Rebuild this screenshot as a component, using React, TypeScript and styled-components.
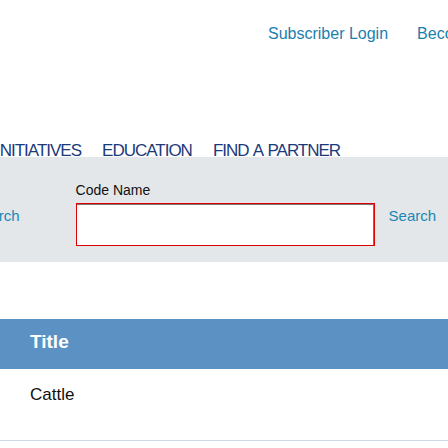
import React from "react";
import styled, { createGlobalStyle } from "styled-components";

const Global = createGlobalStyle`
  html, body { margin: 0; padding: 0; background: #fff; overflow: hidden; }
  body { font-family: "Liberation Sans", Arial, sans-serif; width: 448px; }
`;

const Page = styled.div`
  width: 448px;
  overflow: hidden;
  font-family: "Liberation Sans", Arial, sans-serif;
`;

const TopBar = styled.div`
  display: flex;
  gap: 29px;
  padding: 25px 0 0 268px;
  height: 75px;
  white-space: nowrap;
`;

const TopLink = styled.a`
  font-size: 16px;
  line-height: 18px;
  text-decoration: none;
  &,
  &:link,
  &:visited {
    color: #1a80ad;
  }
`;

const Nav = styled.nav`
  display: flex;
  gap: 21px;
  margin: 0 0 -2px -4px;
  padding-top: 43px;
  white-space: nowrap;
`;

const NavItem = styled.a`
  font-size: 17px;
  line-height: 16px;
  letter-spacing: -1px;
  word-spacing: 1.5px;
  text-decoration: none;
  &,
  &:link,
  &:visited {
    color: #1b3a7c;
  }
`;

const SearchBand = styled.section`
  background: #e4e7ea;
  padding: 25px 0 16px;
  display: flex;
  align-items: flex-start;
  white-space: nowrap;
`;

const SearchLink = styled.a<{ $left?: boolean }>`
  font-size: 15px;
  line-height: 17px;
  text-decoration: none;
  margin-top: 25px;
  margin-left: ${(p) => (p.$left ? "-28px" : "14px")};
  &,
  &:link,
  &:visited {
    color: #1a86b4;
  }
`;

const Field = styled.div`
  display: flex;
  flex-direction: column;
  gap: 5px;
  margin-left: 56px;
`;

const Label = styled.label`
  font-size: 14px;
  line-height: 16px;
  color: #111;
`;

const Input = styled.input`
  box-sizing: border-box;
  width: 299px;
  height: 43px;
  margin: 0;
  border: 1px solid #e00000;
  box-shadow: inset -1px 1px 0 #767676;
  background: #fff;
  outline: none;
`;

const Table = styled.div`
  margin-top: 57px;
`;

const HeadRow = styled.div`
  background: #5b92c3;
  height: 50px;
  display: flex;
  align-items: center;
  padding-left: 30px;
`;

const HeadCell = styled.div`
  font-size: 19px;
  line-height: 22px;
  font-weight: 700;
  color: #fff;
  margin-top: -4px;
`;

const BodyRow = styled.div`
  height: 72px;
  border-bottom: 1px solid #cdd7e5;
  padding: 16px 0 0 30px;
  box-sizing: border-box;
`;

const BodyCell = styled.div`
  font-size: 17px;
  line-height: 20px;
  color: #111;
`;

export default function App() {
  return (
    <Page>
      <Global />
      <TopBar>
        <TopLink href="#">Subscriber Login</TopLink>
        <TopLink href="#">Become a Subscriber</TopLink>
      </TopBar>
      <Nav>
        <NavItem href="#">INITIATIVES</NavItem>
        <NavItem href="#">EDUCATION</NavItem>
        <NavItem href="#">FIND A PARTNER</NavItem>
      </Nav>
      <SearchBand>
        <SearchLink $left href="#">Search</SearchLink>
        <Field>
          <Label>Code Name</Label>
          <Input type="text" />
        </Field>
        <SearchLink href="#">Search</SearchLink>
      </SearchBand>
      <Table>
        <HeadRow>
          <HeadCell>Title</HeadCell>
        </HeadRow>
        <BodyRow>
          <BodyCell>Cattle</BodyCell>
        </BodyRow>
      </Table>
    </Page>
  );
}
